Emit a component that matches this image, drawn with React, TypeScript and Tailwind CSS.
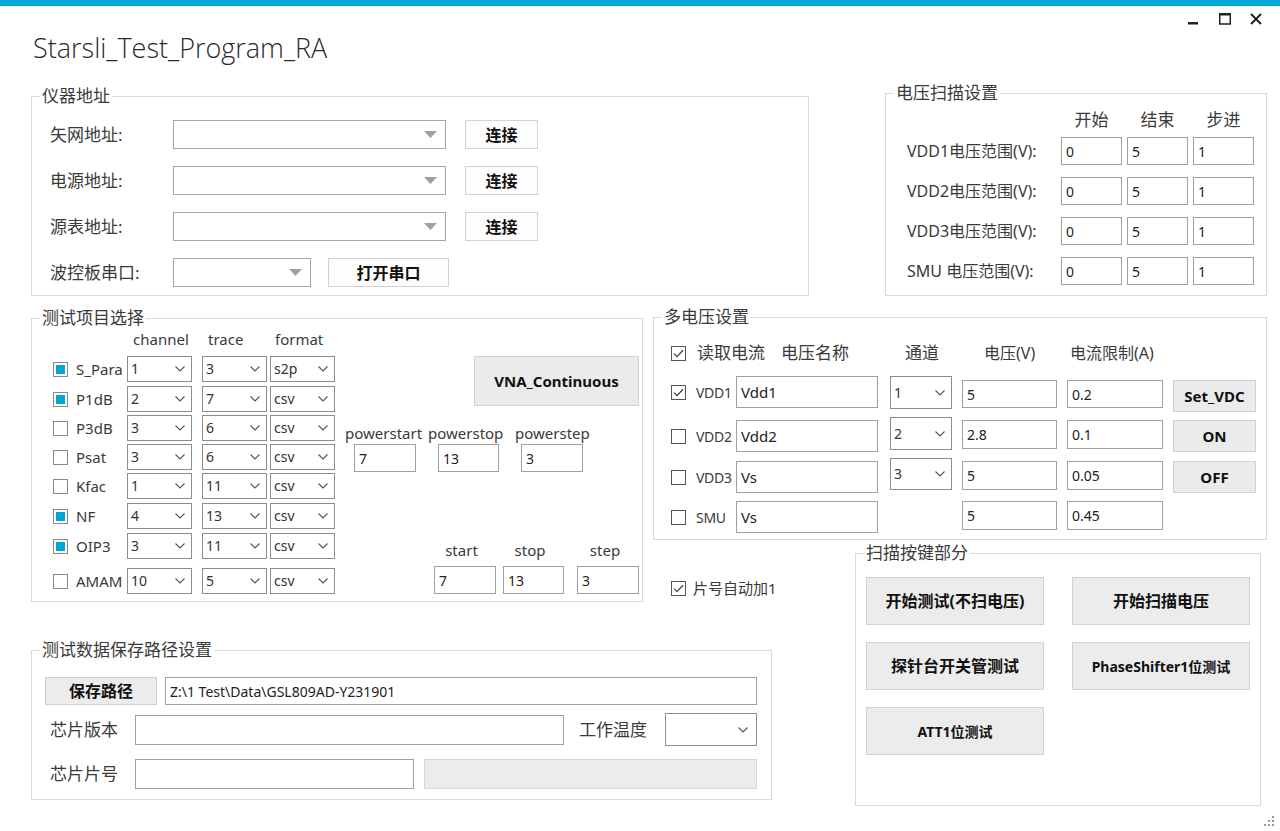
import React from "react";

const UI = "font-['Noto_Sans','Noto_Sans_CJK_SC',sans-serif]";

function Group(props: { title: string; className: string; children: React.ReactNode }) {
  return (
    <fieldset className={`border border-[#dadada] min-w-0 ${props.className}`}>
      <legend className="ml-[8px] px-[2px] text-[17px] leading-[20px] text-[#3a3a3a]">{props.title}</legend>
      {props.children}
    </fieldset>
  );
}

function Chevron() {
  return (
    <svg width="10" height="6" viewBox="0 0 10 6" className="shrink-0">
      <path d="M0.5 0.5L5 5L9.5 0.5" fill="none" stroke="#555" strokeWidth="1.1" />
    </svg>
  );
}

function FillBox(props: { on: boolean }) {
  return (
    <span className="w-[15px] h-[15px] border border-[#8a8a8a] bg-white p-[2px] flex shrink-0">
      {props.on && <span className="flex-1 bg-[#00a6d6]" />}
    </span>
  );
}

function TickBox(props: { on: boolean }) {
  return (
    <span className="w-[15px] h-[15px] border border-[#555] bg-white flex items-center justify-center shrink-0">
      {props.on && (
        <svg width="11" height="9" viewBox="0 0 11 9">
          <path d="M1 4.6L4 7.6L10 1.2" fill="none" stroke="#404040" strokeWidth="1.3" />
        </svg>
      )}
    </span>
  );
}

function TriCombo(props: { w: string }) {
  return (
    <div className={`${props.w} h-[29px] border border-[#a6a6a6] bg-white flex items-center justify-end pr-[8px]`}>
      <svg width="13" height="7" viewBox="0 0 13 7">
        <path d="M0 0H13L6.5 7Z" fill="#a0a0a0" />
      </svg>
    </div>
  );
}

function Combo(props: { v: string; cls: string }) {
  return (
    <div className={`border border-[#8c8c8c] bg-white flex items-center justify-between pl-[3px] pr-[6px] text-[14px] text-[#333] ${props.cls}`}>
      <span className="leading-none">{props.v}</span>
      <Chevron />
    </div>
  );
}

function Box(props: { v?: string; cls: string }) {
  return (
    <input
      readOnly
      value={props.v ?? ""}
      className={`border border-[#a0a0a0] bg-white pl-[4px] text-[14px] text-[#222] outline-none ${props.cls}`}
    />
  );
}

const tests = [
  { n: "S_Para", on: true, c: "1", t: "3", f: "s2p", mt: "mt-[7px]" },
  { n: "P1dB", on: true, c: "2", t: "7", f: "csv", mt: "mt-[4px]" },
  { n: "P3dB", on: false, c: "3", t: "6", f: "csv", mt: "mt-[3px]" },
  { n: "Psat", on: false, c: "3", t: "6", f: "csv", mt: "mt-[3px]" },
  { n: "Kfac", on: false, c: "1", t: "11", f: "csv", mt: "mt-[3px]" },
  { n: "NF", on: true, c: "4", t: "13", f: "csv", mt: "mt-[4px]" },
  { n: "OIP3", on: true, c: "3", t: "11", f: "csv", mt: "mt-[4px]" },
  { n: "AMAM", on: false, c: "10", t: "5", f: "csv", mt: "mt-[9px]" },
];

const volts = [
  { cb: true, n: "VDD1", name: "Vdd1", ch: "1", chCls: "mt-0 h-[33px]", v: "5", i: "0.2", vCls: "mt-[4px] h-[28px]", btn: "Set_VDC", bCls: "mt-[4px]", mt: "mt-[13px]" },
  { cb: false, n: "VDD2", name: "Vdd2", ch: "2", chCls: "-mt-[3px] h-[33px]", v: "2.8", i: "0.1", vCls: "mt-0 h-[29px]", btn: "ON", bCls: "mt-0", mt: "mt-[12px]" },
  { cb: false, n: "VDD3", name: "Vs", ch: "3", chCls: "-mt-[3px] h-[32px]", v: "5", i: "0.05", vCls: "mt-0 h-[29px]", btn: "OFF", bCls: "mt-0", mt: "mt-[9px]" },
  { cb: false, n: "SMU", name: "Vs", ch: "", chCls: "", v: "5", i: "0.45", vCls: "mt-0 h-[29px]", btn: "", bCls: "", mt: "mt-[8px]" },
];

export default function App() {
  return (
    <div className={`relative w-[1280px] h-[831px] bg-white overflow-hidden text-[#3a3a3a] ${UI}`}>
      <div className="h-[6px] bg-[#00a9d8]" />

      <div className="flex h-[74px] justify-between">
        <div className="pl-[33px] pt-[24px] text-[27px] leading-[36px] font-light text-[#2a2a2a] font-['Open_Sans','Noto_Sans',sans-serif]">
          Starsli_Test_Program_RA
        </div>
        <div className="flex items-start pt-[7px] pr-[18px]">
          <svg width="10" height="14" viewBox="0 0 10 14">
            <rect x="0" y="9" width="10" height="2.5" fill="#222" />
          </svg>
          <svg width="12" height="12" viewBox="0 0 12 12" className="ml-[21px]">
            <rect x="0.75" y="1" width="10.5" height="10" fill="none" stroke="#222" strokeWidth="1.5" />
            <rect x="0" y="0" width="12" height="2.5" fill="#222" />
          </svg>
          <svg width="12" height="12" viewBox="0 0 12 12" className="ml-[19px]">
            <path d="M1 1L11 11M11 1L1 11" stroke="#222" strokeWidth="2" />
          </svg>
        </div>
      </div>

      {/* row A */}
      <div className="flex items-start">
        <Group title="仪器地址" className="ml-[31px] mt-[6px] w-[778px] h-[210px]">
          <div className="pl-[18px] pt-[14px] flex flex-col gap-[17px] text-[17px]">
            {["矢网地址:", "电源地址:", "源表地址:"].map((l) => (
              <div key={l} className="flex items-center h-[29px]">
                <span className="w-[123px]">{l}</span>
                <TriCombo w="w-[273px]" />
                <button className="ml-[19px] w-[73px] h-[29px] border border-[#d2d2d2] bg-[#fdfdfd] font-bold text-[16px] text-[#111]">
                  连接
                </button>
              </div>
            ))}
            <div className="flex items-center h-[29px]">
              <span className="w-[123px]">波控板串口:</span>
              <TriCombo w="w-[138px]" />
              <button className="ml-[17px] w-[121px] h-[29px] border border-[#d2d2d2] bg-[#fdfdfd] font-bold text-[16px] text-[#111]">
                打开串口
              </button>
            </div>
          </div>
        </Group>

        <Group title="电压扫描设置" className="ml-[76px] mt-[3px] w-[382px] h-[213px]">
          <div className="pl-[21px] pt-[7px] text-[16px]">
            <div className="flex h-[20px] ml-[154px] gap-[5px] items-center">
              {["开始", "结束", "步进"].map((h) => (
                <span key={h} className="w-[61px] text-center text-[17px]">{h}</span>
              ))}
            </div>
            <div className="mt-[7px] flex flex-col gap-[12px]">
              {["VDD1电压范围(V):", "VDD2电压范围(V):", "VDD3电压范围(V):", "SMU 电压范围(V):"].map((l) => (
                <div key={l} className="flex items-center h-[28px]">
                  <span className="w-[154px] whitespace-nowrap">{l}</span>
                  <div className="flex gap-[5px]">
                    <Box v="0" cls="w-[61px] h-[28px]" />
                    <Box v="5" cls="w-[61px] h-[28px]" />
                    <Box v="1" cls="w-[61px] h-[28px]" />
                  </div>
                </div>
              ))}
            </div>
          </div>
        </Group>
      </div>

      {/* row B */}
      <div className="flex items-start">
        <div className="ml-[31px] w-[612px] shrink-0">
          <Group title="测试项目选择" className="mt-[12px] w-[612px] h-[294px]">
            <div className="flex pl-[21px] pt-[1px]">
              <div className="w-[282px]">
                <div className="flex h-[20px] items-center text-[15px]">
                  <span className="ml-[80px] w-[75px]">channel</span>
                  <span className="w-[67px]">trace</span>
                  <span>format</span>
                </div>
                {tests.map((r) => (
                  <div key={r.n} className={`flex items-center h-[26px] ${r.mt}`}>
                    <FillBox on={r.on} />
                    <span className="ml-[8px] w-[51px] text-[15px] whitespace-nowrap">{r.n}</span>
                    <Combo v={r.c} cls="w-[65px] h-[26px]" />
                    <Combo v={r.t} cls="ml-[10px] w-[65px] h-[26px]" />
                    <Combo v={r.f} cls="ml-[3px] w-[65px] h-[26px]" />
                  </div>
                ))}
              </div>
              <div className="ml-[10px] w-[294px] flex flex-col">
                <button className="self-end mt-[27px] w-[165px] h-[50px] border border-[#d2d2d2] bg-[#ebebeb] font-bold text-[15px] text-[#111]">
                  VNA_Continuous
                </button>
                <div className="flex mt-[17px] h-[20px] items-center text-[15px] whitespace-nowrap">
                  <span className="w-[83px]">powerstart</span>
                  <span className="w-[87px]">powerstop</span>
                  <span>powerstep</span>
                </div>
                <div className="flex mt-[1px]">
                  <Box v="7" cls="ml-[9px] w-[62px] h-[28px]" />
                  <Box v="13" cls="ml-[22px] w-[61px] h-[28px]" />
                  <Box v="3" cls="ml-[22px] w-[62px] h-[28px]" />
                </div>
                <div className="flex mt-[68px] h-[20px] items-center text-[15px]">
                  <span className="ml-[89px] w-[62px] pr-[7px] text-center">start</span>
                  <span className="ml-[7px] w-[61px] pr-[7px] text-center">stop</span>
                  <span className="ml-[13px] w-[62px] pr-[6px] text-center">step</span>
                </div>
                <div className="flex mt-[6px]">
                  <Box v="7" cls="ml-[89px] w-[62px] h-[28px]" />
                  <Box v="13" cls="ml-[7px] w-[61px] h-[28px]" />
                  <Box v="3" cls="ml-[13px] w-[62px] h-[28px]" />
                </div>
              </div>
            </div>
          </Group>

          <Group title="测试数据保存路径设置" className="mt-[38px] w-[741px] h-[160px]">
            <div className="pl-[13px] pt-[17px] text-[17px]">
              <div className="flex h-[28px]">
                <button className="w-[112px] h-[28px] border border-[#d0d0d0] bg-[#ececec] font-bold text-[16px] text-[#111]">
                  保存路径
                </button>
                <Box v={"Z:\\1 Test\\Data\\GSL809AD-Y231901"} cls="ml-[8px] w-[592px] h-[28px]" />
              </div>
              <div className="flex items-center h-[33px] mt-[8px]">
                <span className="ml-[5px] w-[85px]">芯片版本</span>
                <Box cls="w-[429px] h-[30px]" />
                <span className="ml-[15px] w-[86px]">工作温度</span>
                <Combo v="" cls="w-[92px] h-[33px] pr-[8px]" />
              </div>
              <div className="flex items-center h-[30px] mt-[13px]">
                <span className="ml-[5px] w-[85px]">芯片片号</span>
                <Box cls="w-[279px] h-[30px]" />
                <div className="ml-[10px] w-[333px] h-[30px] border border-[#d6d6d6] bg-[#ececec]" />
              </div>
            </div>
          </Group>
        </div>

        <div className="ml-[10px] w-[614px] shrink-0">
          <Group title="多电压设置" className="mt-[11px] w-[614px] h-[233px]">
            <div className="pl-[17px] pt-[16px] text-[16px]">
              <div className="flex h-[20px] items-center">
                <TickBox on={true} />
                <span className="ml-[11px] w-[84px] text-[17px]">读取电流</span>
                <span className="w-[124px] text-[17px]">电压名称</span>
                <span className="w-[79px] text-[17px]">通道</span>
                <span className="w-[86px]">电压(V)</span>
                <span>电流限制(A)</span>
              </div>
              {volts.map((r) => (
                <div key={r.n} className={`flex items-start h-[32px] ${r.mt}`}>
                  <div className="h-[32px] flex items-center">
                    <TickBox on={r.cb} />
                    <span className="ml-[10px] w-[40px] text-[14px] tracking-[-0.3px]">{r.n}</span>
                  </div>
                  <Box v={r.name} cls="w-[142px] h-[32px] text-[15px]" />
                  {r.ch ? (
                    <Combo v={r.ch} cls={`ml-[12px] w-[62px] ${r.chCls}`} />
                  ) : (
                    <div className="ml-[12px] w-[62px]" />
                  )}
                  <Box v={r.v} cls={`ml-[10px] w-[95px] ${r.vCls}`} />
                  <Box v={r.i} cls={`ml-[10px] w-[96px] ${r.vCls}`} />
                  {r.btn && (
                    <button className={`ml-[10px] w-[83px] h-[32px] border border-[#d2d2d2] bg-[#ebebeb] font-bold text-[15px] text-[#111] ${r.bCls}`}>
                      {r.btn}
                    </button>
                  )}
                </div>
              ))}
            </div>
          </Group>

          <div className="flex items-start">
            <div className="w-[202px] pl-[18px] pt-[37px] flex items-center gap-[7px] text-[15px]">
              <TickBox on={true} />
              <span>片号自动加1</span>
            </div>
            <Group title="扫描按键部分" className="mt-[3px] w-[406px] h-[263px]">
              <div className="pl-[10px] pt-[14px] grid grid-cols-[178px_178px] gap-x-[28px] gap-y-[17px]">
                {["开始测试(不扫电压)", "开始扫描电压", "探针台开关管测试", "PhaseShifter1位测试", "ATT1位测试"].map((b) => (
                  <button
                    key={b}
                    className={`h-[48px] border border-[#d2d2d2] bg-[#ececec] font-bold text-[#111] ${b.startsWith("Phase") || b.startsWith("ATT") ? "text-[14px]" : "text-[16px]"}`}
                  >
                    {b}
                  </button>
                ))}
              </div>
            </Group>
          </div>
        </div>
      </div>

      <svg width="12" height="12" viewBox="0 0 12 12" className="absolute right-[5px] bottom-[4px]">
        <rect x="9" y="1" width="2" height="2" fill="#9a9a9a" />
        <rect x="5" y="5" width="2" height="2" fill="#9a9a9a" />
        <rect x="9" y="5" width="2" height="2" fill="#9a9a9a" />
        <rect x="1" y="9" width="2" height="2" fill="#9a9a9a" />
        <rect x="5" y="9" width="2" height="2" fill="#9a9a9a" />
        <rect x="9" y="9" width="2" height="2" fill="#9a9a9a" />
      </svg>
    </div>
  );
}
